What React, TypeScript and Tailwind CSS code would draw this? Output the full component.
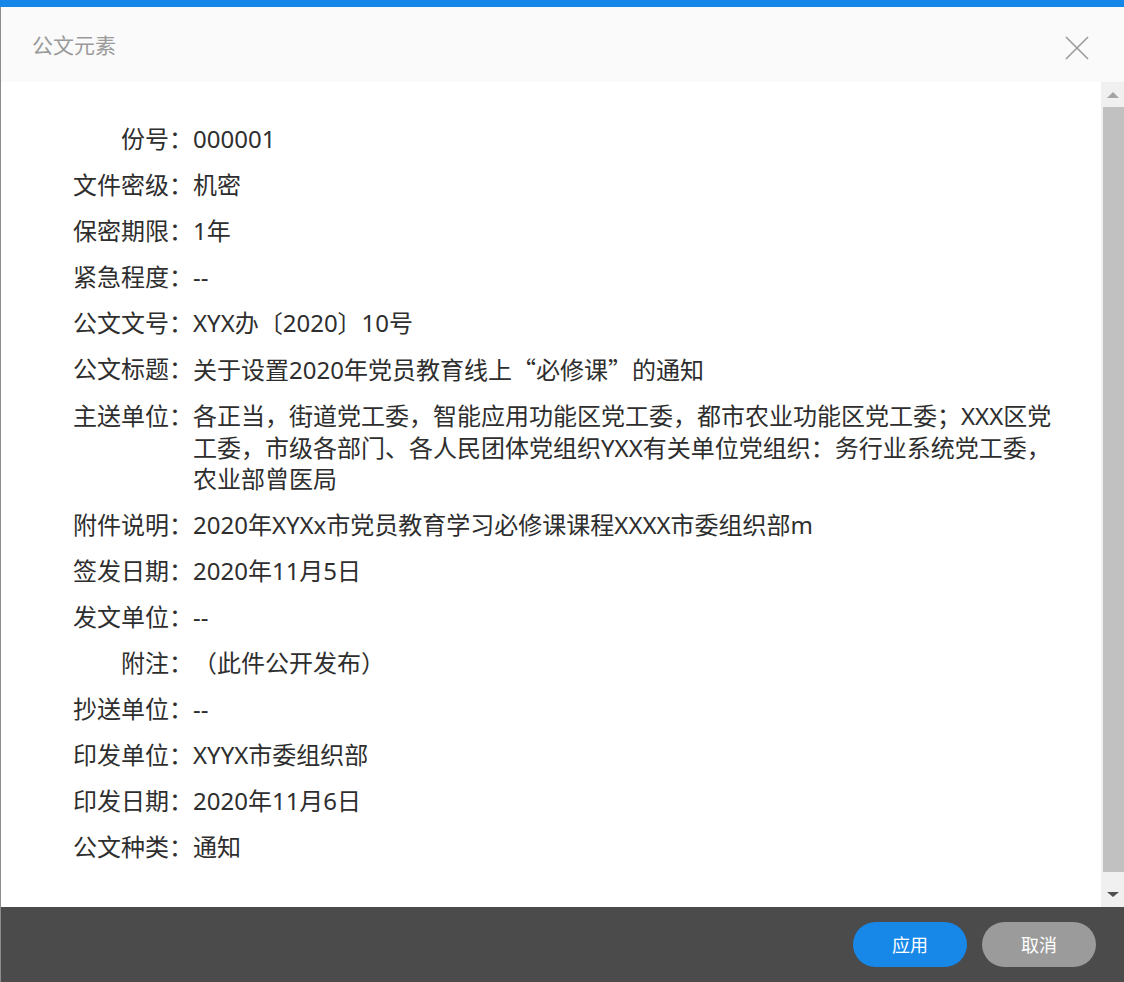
import React from "react";

type Field = { label: string; value: React.ReactNode };

const Q = ({ children }: { children: React.ReactNode }) => (
  <span className="font-['Noto_Sans_CJK_SC',sans-serif]">{children}</span>
);

const fields: Field[] = [
  { label: "份号：", value: "000001" },
  { label: "文件密级：", value: "机密" },
  { label: "保密期限：", value: "1年" },
  { label: "紧急程度：", value: "--" },
  { label: "公文文号：", value: "XYX办〔2020〕10号" },
  {
    label: "公文标题：",
    value: (
      <>
        关于设置2020年党员教育线上<Q>“</Q>必修课<Q>”</Q>的通知
      </>
    ),
  },
  {
    label: "主送单位：",
    value:
      "各正当，街道党工委，智能应用功能区党工委，都市农业功能区党工委；XXX区党工委，市级各部门、各人民团体党组织YXX有关单位党组织：务行业系统党工委，农业部曾医局",
  },
  { label: "附件说明：", value: "2020年XYXx市党员教育学习必修课课程XXXX市委组织部m" },
  { label: "签发日期：", value: "2020年11月5日" },
  { label: "发文单位：", value: "--" },
  { label: "附注：", value: "（此件公开发布）" },
  { label: "抄送单位：", value: "--" },
  { label: "印发单位：", value: "XYYX市委组织部" },
  { label: "印发日期：", value: "2020年11月6日" },
  { label: "公文种类：", value: "通知" },
];

function CloseIcon() {
  return (
    <svg width="24" height="24" viewBox="0 0 24 24" fill="none">
      <path d="M1 1L23 23M23 1L1 23" stroke="#9b9b9b" strokeWidth="1.6" />
    </svg>
  );
}

function ScrollBar() {
  return (
    <div className="w-[23px] shrink-0 flex flex-col bg-[#f0f0f0]">
      <div className="h-[25px] flex items-center justify-center">
        <div className="w-0 h-0 border-l-[6px] border-r-[6px] border-b-[6px] border-l-transparent border-r-transparent border-b-[#a3a3a3]" />
      </div>
      <div className="flex-1 pl-[2px] pb-[10px] flex">
        <div className="flex-1 bg-[#c1c1c1]" />
      </div>
      <div className="h-[25px] flex items-center justify-center">
        <div className="w-0 h-0 border-l-[6px] border-r-[6px] border-t-[5px] border-l-transparent border-r-transparent border-t-[#505050]" />
      </div>
    </div>
  );
}

export default function App() {
  return (
    <div className="w-[1124px] h-[982px] flex flex-col bg-white font-['Noto_Sans','Noto_Sans_CJK_SC',sans-serif]">
      <div className="h-[7px] shrink-0 bg-[#1487e8]" />
      <div className="flex-1 flex flex-col border-l border-[#8c8c8c] min-h-0">
        <header className="h-[75px] shrink-0 bg-[#fafafa] flex items-center justify-between pl-[31px] pr-[35px]">
          <h1 className="text-[21px] text-[#9a9a9a] font-['Noto_Sans_CJK_SC',sans-serif] leading-none">公文元素</h1>
          <button className="w-[24px] h-[24px] mt-[6px] flex items-center justify-center">
            <CloseIcon />
          </button>
        </header>

        <main className="flex-1 flex min-h-0">
          <div className="flex-1 pl-[72px] pr-[36px] pt-[41px]">
            <dl className="grid grid-cols-[120px_1fr] gap-y-[14.5px] text-[24px] leading-[31.5px] text-[#2e2e2e]">
              {fields.map((f) => (
                <React.Fragment key={f.label}>
                  <dt className="text-right whitespace-nowrap">{f.label}</dt>
                  <dd className="m-0">{f.value}</dd>
                </React.Fragment>
              ))}
            </dl>
          </div>
          <ScrollBar />
        </main>

        <footer className="h-[75px] shrink-0 bg-[#4b4b4b] flex items-center justify-end gap-[15px] pr-[28px]">
          <button className="w-[114px] h-[45px] rounded-full bg-[#1787e8] text-white text-[18px] font-['Noto_Sans_CJK_SC',sans-serif]">
            应用
          </button>
          <button className="w-[114px] h-[45px] rounded-full bg-[#9b9b9b] text-white text-[18px] font-['Noto_Sans_CJK_SC',sans-serif]">
            取消
          </button>
        </footer>
      </div>
    </div>
  );
}
